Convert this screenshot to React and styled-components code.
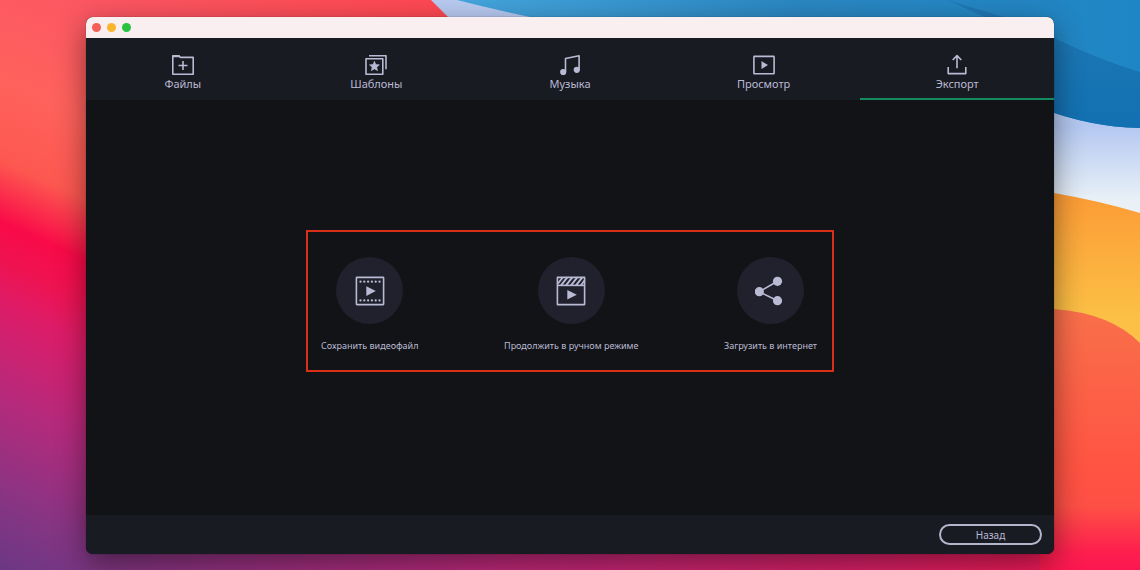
import { useState } from "react";
import styled, { createGlobalStyle } from "styled-components";

const GlobalStyle = createGlobalStyle`
  * {
    box-sizing: border-box;
  }

  body {
    margin: 0;
    font-family: "Noto Sans", "Open Sans", sans-serif;
    color: #b9bad3;
  }

  button {
    font-family: inherit;
    color: inherit;
    cursor: pointer;
  }
`;

// Desktop
const Desktop = styled.div`
  position: relative;
  display: flex;
  min-height: 100vh;
  padding: 17px 86px 16px;
  overflow: hidden;
`;

const WallpaperSvg = styled.svg`
  position: absolute;
  inset: 0;
  width: 100%;
  height: 100%;
`;

// Window
const Window = styled.div`
  position: relative;
  display: flex;
  flex: 1;
  flex-direction: column;
  border-radius: 7px;
  background-color: #121316;
  box-shadow: 0 9px 30px rgba(0, 0, 0, 0.45), 0 0 1px rgba(0, 0, 0, 0.6);
  overflow: hidden;
`;

const TitleBar = styled.header`
  display: flex;
  align-items: center;
  gap: 6px;
  height: 21px;
  padding-left: 6px;
  background-color: #faeff0;
`;

const WindowButton = styled.button`
  width: 9px;
  height: 9px;
  padding: 0;
  border: none;
  border-radius: 50%;
  background-color: ${(props) => props.$color};
`;

const Tabs = styled.nav`
  display: flex;
  height: 62px;
  background-color: #191b23;
`;

const Tab = styled.button`
  display: flex;
  flex: 1;
  flex-direction: column;
  align-items: center;
  padding: 16px 0 0;
  border: none;
  border-bottom: 2px solid
    ${(props) => (props.$active ? "#148a5f" : "transparent")};
  background: none;
  font-size: 11px;
  line-height: 16px;
`;

const Content = styled.main`
  display: flex;
  flex: 1;
  align-items: center;
  justify-content: center;
  padding-bottom: 13px;
`;

const Actions = styled.div`
  display: flex;
  justify-content: space-between;
  width: 528px;
  padding: 25px 15px 16px 13px;
  border: 2px solid #d92f18;
`;

const Action = styled.button`
  display: flex;
  flex-direction: column;
  align-items: center;
  gap: 14px;
  padding: 0;
  border: none;
  background: none;
  font-size: 9px;
  line-height: 16px;
`;

const Circle = styled.span`
  display: flex;
  align-items: center;
  justify-content: center;
  width: 67px;
  height: 67px;
  border-radius: 50%;
  background-color: #20212c;
`;

const Footer = styled.footer`
  display: flex;
  align-items: center;
  justify-content: flex-end;
  height: 39px;
  padding-right: 12px;
  background-color: #191b23;
`;

const BackButton = styled.button`
  width: 103px;
  height: 21px;
  padding: 0;
  border: 2px solid #b4b5cb;
  border-radius: 11px;
  background: none;
  font-size: 10px;
  line-height: 16px;
`;

const Icon = styled.svg`
  display: block;
  fill: none;
  stroke: #b9bad3;
  stroke-width: 1.6;
  stroke-linejoin: round;
`;

function Wallpaper() {
  return (
    <WallpaperSvg
      viewBox="0 0 1140 570"
      preserveAspectRatio="none"
      aria-hidden="true"
    >
      <defs>
        <linearGradient
          id="left"
          gradientUnits="userSpaceOnUse"
          x1="86"
          y1="0"
          x2="-170"
          y2="570"
        >
          <stop offset="0" stopColor="#fc5763" />
          <stop offset="0.17" stopColor="#fe625c" />
          <stop offset="0.29" stopColor="#fd5850" />
          <stop offset="0.38" stopColor="#f90a48" />
          <stop offset="0.44" stopColor="#ee1352" />
          <stop offset="0.5" stopColor="#dd1c68" />
          <stop offset="0.64" stopColor="#b42a7c" />
          <stop offset="0.79" stopColor="#853583" />
          <stop offset="0.89" stopColor="#6b3784" />
          <stop offset="1" stopColor="#6b3784" />
        </linearGradient>
        <linearGradient id="top" x1="0" y1="0" x2="1" y2="0">
          <stop offset="0" stopColor="#fc5763" />
          <stop offset="0.34" stopColor="#ff4852" />
          <stop offset="1" stopColor="#ff4852" />
        </linearGradient>
        <linearGradient id="bottom" x1="0" y1="0" x2="1" y2="0">
          <stop offset="0" stopColor="#7c3680" />
          <stop offset="0.15" stopColor="#983080" />
          <stop offset="0.4" stopColor="#c0287a" />
          <stop offset="0.75" stopColor="#dc2066" />
          <stop offset="1" stopColor="#fb1750" />
        </linearGradient>
        <linearGradient id="pale" x1="0" y1="0" x2="0" y2="1">
          <stop offset="0" stopColor="#b9cbf2" />
          <stop offset="0.55" stopColor="#b4c8f1" />
          <stop offset="0.87" stopColor="#e9f1f7" />
        </linearGradient>
        <linearGradient id="blue" x1="0" y1="0" x2="1" y2="0">
          <stop offset="0" stopColor="#45a6de" />
          <stop offset="0.5" stopColor="#2b87c2" />
          <stop offset="1" stopColor="#1f86c5" />
        </linearGradient>
        <linearGradient id="deep" x1="0" y1="0" x2="0" y2="1">
          <stop offset="0" stopColor="#2079b4" />
          <stop offset="1" stopColor="#1270b2" />
        </linearGradient>
        <linearGradient id="yellow" x1="0" y1="0" x2="0" y2="1">
          <stop offset="0" stopColor="#fc9a35" />
          <stop offset="0.75" stopColor="#fbc045" />
          <stop offset="1" stopColor="#fbc045" />
        </linearGradient>
        <linearGradient id="coral" x1="0" y1="0" x2="0" y2="1">
          <stop offset="0" stopColor="#f9704a" />
          <stop offset="0.6" stopColor="#ff5443" />
          <stop offset="0.76" stopColor="#fe4f45" />
          <stop offset="0.93" stopColor="#fd1f4e" />
          <stop offset="1" stopColor="#fb1750" />
        </linearGradient>
      </defs>
      <rect width="1140" height="570" fill="url(#left)" />
      <rect x="86" width="1054" height="30" fill="url(#top)" />
      <rect y="540" x="86" width="1054" height="30" fill="url(#bottom)" />
      <path d="M431 0 L461 30 H1040 V230 H1140 V0 Z" fill="url(#pale)" />
      <path
        d="M457 0 Q492 9 530 17 L600 30 H860 L1040 108 Q1090 127 1140 128 V0 Z"
        fill="url(#blue)"
      />
      <path
        d="M947 0 L1004 17 L1054 38 Q1100 60 1140 72 V128 Q1090 127 1040 108 V36 L1000 24 Z"
        fill="url(#deep)"
      />
      <path
        d="M1040 190 L1054 193 Q1100 201 1140 213 V360 H1040 Z"
        fill="url(#yellow)"
      />
      <path
        d="M1040 308 L1054 309 Q1110 313 1140 343 V570 H1040 Z"
        fill="url(#coral)"
      />
    </WallpaperSvg>
  );
}

function FilesIcon() {
  return (
    <Icon width="22" height="22" viewBox="0 0 22 22">
      <path d="M.8 20.2V1.8h6.4l1 1.6h13v16.8Z" />
      <path d="M.8 2.3h6.7" strokeWidth="2" />
      <path d="M6.5 11.5h9M11 7v9" />
    </Icon>
  );
}

function TemplatesIcon() {
  return (
    <Icon width="22" height="22" viewBox="0 0 22 22">
      <path d="M1 4.8h16.8v15.4H1Z" />
      <path d="M4 1.8h17v13.4" />
      <path
        d="M9.4 7.2l1.5 3.2 3.6.4-2.7 2.4.8 3.5-3.2-1.8-3.1 1.8.8-3.5-2.7-2.4 3.6-.4Z"
        fill="#b9bad3"
        strokeWidth=".5"
      />
    </Icon>
  );
}

function MusicIcon() {
  return (
    <Icon width="22" height="22" viewBox="0 0 22 22">
      <path d="M6.5 17.5V4.5l13.6-2.7V16" />
      <circle cx="4.2" cy="18" r="3.1" fill="#b9bad3" stroke="none" />
      <circle cx="17.8" cy="15.8" r="3.1" fill="#b9bad3" stroke="none" />
    </Icon>
  );
}

function PreviewIcon() {
  return (
    <Icon width="22" height="22" viewBox="0 0 22 22">
      <rect x=".9" y="2.4" width="20.2" height="17.4" rx=".5" />
      <path d="M8.5 7.1v8l6.5-4Z" fill="#b9bad3" stroke="none" />
    </Icon>
  );
}

function ExportIcon() {
  return (
    <Icon width="22" height="22" viewBox="0 0 22 22">
      <path d="M2.2 13v6.6h17.6V13" />
      <path d="M11 14.3V2M6.7 6 11 1.6 15.3 6" />
    </Icon>
  );
}

function SaveIcon() {
  return (
    <Icon width="30" height="30" viewBox="0 0 30 30">
      <rect x="1.4" y="1.4" width="27.2" height="27.2" rx=".5" />
      <path
        d="M5.5 5.7h19.5M5.5 24.4h19.5"
        strokeWidth="2.3"
        strokeLinecap="round"
        strokeDasharray="0 3.8"
      />
      <path d="M11.3 10.2v9.8l9.5-4.9Z" fill="#b9bad3" stroke="none" />
    </Icon>
  );
}

function ManualIcon() {
  return (
    <Icon width="30" height="30" viewBox="0 0 30 30">
      <rect x="1.4" y="1.4" width="27.2" height="27.2" />
      <path d="M1.4 9.4h27.2" />
      <path
        d="M2 7.5l4.6-6M5 9.3l6.3-8M10 9.3l6.3-8M15 9.3l6.3-8M20 9.3l6.3-8M25 9.3l3.7-5"
        strokeWidth="1.9"
      />
      <path d="M11.3 14v9.6l9.5-4.8Z" fill="#b9bad3" stroke="none" />
    </Icon>
  );
}

function ShareIcon() {
  return (
    <Icon width="30" height="30" viewBox="0 0 30 30">
      <path d="M22.5 5.3 4.3 15.7l18.2 9" />
      <g fill="#b9bad3" stroke="none">
        <circle cx="22.5" cy="5.3" r="4.6" />
        <circle cx="4.3" cy="15.7" r="4.6" />
        <circle cx="22.5" cy="24.7" r="4.6" />
      </g>
    </Icon>
  );
}

const windowButtons = [
  { label: "Закрыть", color: "#f45f57" },
  { label: "Свернуть", color: "#f9b62c" },
  { label: "Развернуть", color: "#29c33f" },
];

const tabs = [
  { title: "Файлы", icon: FilesIcon },
  { title: "Шаблоны", icon: TemplatesIcon },
  { title: "Музыка", icon: MusicIcon },
  { title: "Просмотр", icon: PreviewIcon },
  { title: "Экспорт", icon: ExportIcon },
];

const actions = [
  { title: "Сохранить видеофайл", icon: SaveIcon },
  { title: "Продолжить в ручном режиме", icon: ManualIcon },
  { title: "Загрузить в интернет", icon: ShareIcon },
];

function App() {
  const [activeTab, setActiveTab] = useState("Экспорт");

  return (
    <Desktop>
      <GlobalStyle />
      <Wallpaper />
      <Window>
        <TitleBar>
          {windowButtons.map((btn) => (
            <WindowButton
              key={btn.label}
              aria-label={btn.label}
              $color={btn.color}
            />
          ))}
        </TitleBar>
        <Tabs>
          {tabs.map((tab) => (
            <Tab
              key={tab.title}
              $active={tab.title === activeTab}
              onClick={() => setActiveTab(tab.title)}
            >
              <tab.icon />
              {tab.title}
            </Tab>
          ))}
        </Tabs>
        <Content>
          <Actions>
            {actions.map((action) => (
              <Action key={action.title}>
                <Circle>
                  <action.icon />
                </Circle>
                {action.title}
              </Action>
            ))}
          </Actions>
        </Content>
        <Footer>
          <BackButton>Назад</BackButton>
        </Footer>
      </Window>
    </Desktop>
  );
}

export default App;
